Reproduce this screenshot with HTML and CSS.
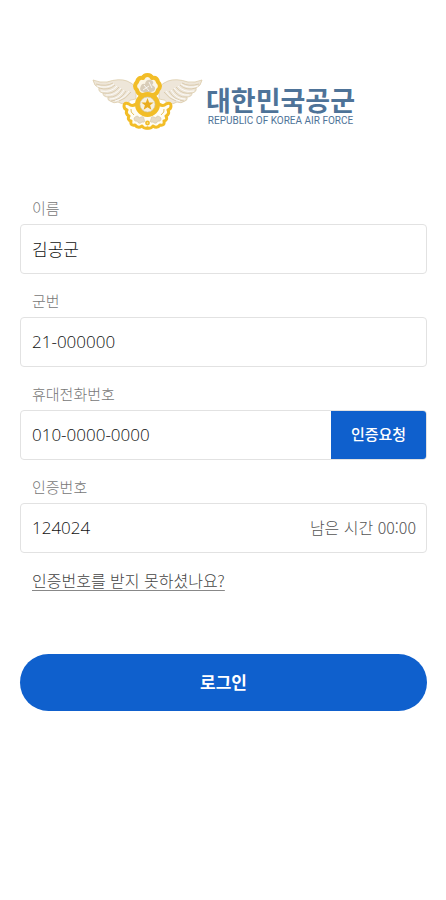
FILE: index.html
```html
<!DOCTYPE html>
<html lang="ko">

<head>
  <meta charset="UTF-8">
  <meta name="viewport" content="width=device-width, initial-scale=1.0">
  <title>대한민국공군 로그인</title>
  <link rel="stylesheet" href="styles.css">
</head>

<body>
  <div class="container">
    <header class="logo">
      <svg class="emblem" viewBox="0 0 112 58" aria-hidden="true">
        <defs>
          <g id="wing">
            <path fill="#eee6d9" stroke="#dccba9" stroke-width="0.8" stroke-linejoin="round" d="M1 7 Q8 10 15 9 Q27 5 35 8 Q41 10 44 15 L44 26 Q38 26 35 30 Q30 32 26 29 Q22 31 18 28 Q15 27 16 24 Q11 24 11 20 Q6 19 7 15 Q2 13 1 7Z" />
            <path fill="none" stroke="#d8c8aa" stroke-width="0.9" d="M7 15 Q17 18 23 12 M11 20 Q21 22 27 14 M16 24 Q25 25 30 16 M19 28 Q29 27 34 18 M27 28 Q34 26 39 19 M4 11 Q14 14 21 10" />
            <path fill="none" stroke="#fff" stroke-width="0.8" d="M5 13 Q15 16 22 11 M9 18 Q19 20 25 13 M14 22 Q23 23 29 15 M18 26 Q27 26 32 17 M23 28 Q32 26 37 18" />
          </g>
          <!-- branches and leaves beside the centre ring -->
          <g id="branch">
            <path fill="none" stroke="#f2bd27" stroke-width="3" stroke-linecap="round" stroke-linejoin="round" d="M44 31 Q40 34 37 31 Q32 29 32 33 Q32 36 35 37 Q33 41 37 43 Q35 47 39 48 Q38 53 43 52 Q46 56 50 53 Q52 56 55.5 55" />
            <path fill="#e6dbc5" stroke="#cdbb9a" stroke-width="0.5" d="M42 45 Q46 41 47 45 Q52 42 52 46 Q54 50 50 49 Q47 52 45 48 Q42 49 42 45Z" />
            <path fill="none" stroke="#e5c05c" stroke-width="1" d="M39 36 Q38 39 42 42" />
          </g>
        </defs>
        <use href="#wing" />
        <use href="#wing" transform="translate(111 0) scale(-1 1)" />
        <path fill="#fffdf5" d="M34 33 L77 33 L72 51 L55 55 L39 51Z" />
        <use href="#branch" />
        <use href="#branch" transform="translate(111 0) scale(-1 1)" />
        <path fill="#fbf5e6" stroke="#f2bd27" stroke-width="4" stroke-linejoin="round" d="M51 5 Q52 2 55.5 2 Q59 2 60 5 Q65 4 66 9 Q70 13 66 17 Q65 22 60 22 L51 22 Q46 22 45 17 Q41 13 45 9 Q46 4 51 5Z" />
        <path fill="#d8ccb8" d="M48 16 Q49 10 53 11 Q54 6 59 7 Q63 9 60 12 Q65 14 62 18 Q55 21 49 18Z" />
        <path fill="none" stroke="#fff" stroke-width="0.8" d="M52 12 L57 18 M57 9 L60 15 M51 17 L57 13" />
        <circle cx="55.5" cy="31.5" r="10" fill="#f8f1df" stroke="#f2bd27" stroke-width="5" />
        <circle cx="55.5" cy="31.5" r="7.5" fill="none" stroke="#c9c6b9" stroke-width="0.6" />
        <path fill="#e9ad20" d="M55.5 25 L57.1 29.4 L61.7 29.5 L58.1 32.3 L59.4 36.8 L55.5 34.2 L51.6 36.8 L52.9 32.3 L49.3 29.5 L53.9 29.4Z" />
        <circle cx="55.5" cy="50" r="2.4" fill="#f2bd27" />
        <circle cx="55.5" cy="50" r="0.8" fill="#f9e6a8" />
      </svg>
      <div class="logo-text">
        <h1>대한민국공군</h1>
        <p>REPUBLIC OF KOREA AIR FORCE</p>
      </div>
    </header>

    <form>
      <div class="form-group">
        <label for="name">이름</label>
        <div class="input-box">
          <input type="text" id="name" value="김공군">
        </div>
      </div>

      <div class="form-group">
        <label for="service-number">군번</label>
        <div class="input-box">
          <input type="text" id="service-number" value="21-000000">
        </div>
      </div>

      <div class="form-group">
        <label for="phone">휴대전화번호</label>
        <div class="input-box">
          <input type="tel" id="phone" value="010-0000-0000">
          <button type="button" class="request-button">인증요청</button>
        </div>
      </div>

      <div class="form-group">
        <label for="code">인증번호</label>
        <div class="input-box">
          <input type="text" id="code" inputmode="numeric" value="124024">
          <span class="timer">남은 시간 00:00</span>
        </div>
      </div>

      <a href="#" class="help-link">인증번호를 받지 못하셨나요?</a>

      <button type="submit" class="login-button">로그인</button>
    </form>
  </div>
</body>

</html>
```
FILE: styles.css
```css
* {
  box-sizing: border-box;
}

body {
  font-family: "Noto Sans CJK KR", sans-serif;
  background-color: white;
  color: #333;
  margin: 0;
}

.container {
  padding: 73px 19px 40px 20px;
}

.logo {
  display: flex;
  justify-content: center;
  gap: 2px;
  margin-bottom: 65px;
}

.emblem {
  width: 112px;
  height: 58px;
}

.logo-text {
  padding-top: 13px;
  color: #4e7398;
}

h1 {
  margin: 0;
  font-size: 27px;
  line-height: 28px;
  font-weight: 700;
}

.logo-text p {
  margin: 0;
  font-family: Roboto, sans-serif;
  font-size: 10px;
  line-height: 14px;
  text-align: center;
  white-space: nowrap;
}

.form-group {
  margin-bottom: 15px;
}

label {
  display: block;
  margin-bottom: 4px;
  padding-left: 12px;
  font-size: 15px;
  line-height: 24px;
  font-weight: 300;
  color: #777;
}

.input-box {
  display: flex;
  align-items: center;
  height: 50px;
  border: 1px solid #e2e2e2;
  border-radius: 4px;
  overflow: hidden;
}

input {
  flex: 1;
  min-width: 0;
  height: 100%;
  padding: 0 11px 2px;
  border: none;
  background: none;
  font-family: "Open Sans", "Noto Sans CJK KR", sans-serif;
  font-size: 17px;
  font-weight: 300;
  color: #111;
}

button {
  border: none;
  background-color: #0f60cd;
  color: white;
  font-family: inherit;
  cursor: pointer;
}

.request-button {
  width: 95px;
  height: 100%;
  padding-bottom: 4px;
  font-size: 15px;
  font-weight: 500;
}

.timer {
  padding-right: 10px;
  padding-bottom: 2px;
  font-size: 16px;
  line-height: 24px;
  font-weight: 300;
  color: #555;
}

.help-link {
  display: inline-block;
  margin-left: 12px;
  font-size: 16px;
  line-height: 24px;
  font-weight: 300;
  color: #444;
  text-decoration-color: #888;
  text-underline-offset: 3px;
}

.login-button {
  display: block;
  width: 100%;
  height: 57px;
  margin-top: 62px;
  padding-bottom: 4px;
  border-radius: 29px;
  font-size: 17px;
  font-weight: 700;
}
```
